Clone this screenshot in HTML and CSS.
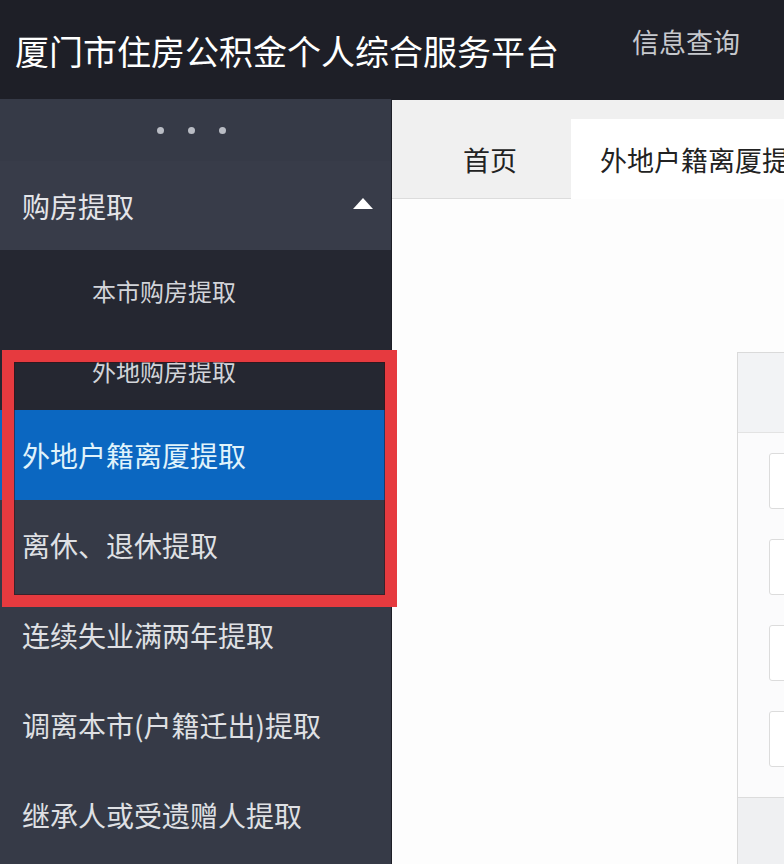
FILE: index.html
```html
<!DOCTYPE html>
<html lang="zh-CN">
<head>
<meta charset="utf-8">
<title>厦门市住房公积金个人综合服务平台</title>
<link rel="stylesheet" href="styles.css">
</head>
<body>
<div class="page">
  <header class="header">
    <div class="title">厦门市住房公积金个人综合服务平台</div>
    <nav class="nav">信息查询</nav>
  </header>
  <div class="layout">
    <aside class="sidebar">
      <div class="dots"><span class="dot"></span><span class="dot"></span><span class="dot"></span></div>
      <div class="group-title">
        <span>购房提取</span>
        <svg class="caret" width="20" height="11" viewBox="0 0 20 11"><polygon points="10,0 20,11 0,11" fill="#ffffff"/></svg>
      </div>
      <div class="submenu">
        <div class="sub-item">本市购房提取</div>
        <div class="sub-item">外地购房提取</div>
      </div>
      <div class="item active">外地户籍离厦提取</div>
      <div class="item">离休、退休提取</div>
      <div class="item">连续失业满两年提取</div>
      <div class="item">调离本市(户籍迁出)提取</div>
      <div class="item">继承人或受遗赠人提取</div>
    </aside>
    <main class="main">
      <div class="tabs">
        <div class="tab">首页</div>
        <div class="tab current">外地户籍离厦提取</div>
      </div>
      <div class="content">
        <div class="panel">
          <div class="panel-head"></div>
          <div class="panel-body">
            <div class="field"></div>
            <div class="field"></div>
            <div class="field"></div>
            <div class="field"></div>
          </div>
          <div class="panel-foot"></div>
        </div>
      </div>
    </main>
  </div>
  <div class="highlight"></div>
</div>
</body>
</html>
```

FILE: styles.css
```css
* { box-sizing: border-box; }
html, body { margin: 0; padding: 0; }
body {
  width: 784px;
  height: 864px;
  overflow: hidden;
  font-family: "Noto Sans CJK SC", "Noto Sans", sans-serif;
  background: #ffffff;
}
.page {
  position: relative;
  width: 784px;
  height: 864px;
  overflow: hidden;
}
.header {
  height: 99px;
  background: #1e1f27;
  display: flex;
  align-items: flex-start;
  padding-left: 15px;
}
.title {
  margin-top: 31px;
  font-size: 34px;
  line-height: 40px;
  color: #ffffff;
  white-space: nowrap;
}
.nav {
  margin-top: 27px;
  margin-left: 73px;
  font-size: 27px;
  line-height: 30px;
  color: #c6c8cd;
  white-space: nowrap;
}
.layout {
  display: flex;
  height: 765px;
}
.sidebar {
  width: 391px;
  flex: none;
  background: #363a47;
  display: flex;
  flex-direction: column;
}
.dots {
  height: 62px;
  display: flex;
  justify-content: center;
  align-items: center;
  gap: 24px;
  padding-right: 9px;
}
.dot {
  width: 7px;
  height: 7px;
  border-radius: 50%;
  background: #b9bcc4;
}
.group-title {
  height: 89px;
  display: flex;
  align-items: center;
  justify-content: space-between;
  padding: 0 18px 0 22px;
  font-size: 28px;
  color: #e4e5e9;
  background: #383c49;
}
.caret { display: block; margin-top: -4px; }
.submenu {
  background: #252731;
}
.sub-item {
  height: 80px;
  display: flex;
  align-items: center;
  padding-left: 92px;
  font-size: 24px;
  color: #d2d4d9;
  white-space: nowrap;
}
.item {
  height: 90px;
  display: flex;
  align-items: center;
  padding-left: 22px;
  font-size: 28px;
  color: #dfe0e4;
  white-space: nowrap;
}
.item.active {
  background: #0b67c1;
  color: #e0f3fb;
}
.main {
  flex: 1;
  min-width: 0;
  overflow: hidden;
  display: flex;
  flex-direction: column;
  padding-top: 1px;
  background: #1e1f27;
}
.tabs {
  height: 99px;
  flex: none;
  margin-left: 1px;
  background: #f0f0f0;
  display: flex;
  align-items: flex-end;
  border-bottom: 1px solid #dcdcdc;
}
.tab {
  width: 179px;
  height: 78px;
  flex: none;
  display: flex;
  align-items: center;
  justify-content: center;
  padding-left: 17px;
  font-size: 27px;
  color: #222222;
  white-space: nowrap;
}
.tab.current {
  width: 260px;
  height: 80px;
  margin-bottom: -1px;
  justify-content: flex-start;
  padding-left: 29px;
  background: #ffffff;
  overflow: hidden;
}
.content {
  flex: 1;
  background: #fdfdfd;
  margin-left: 1px;
  padding: 153px 0 0 345px;
  overflow: hidden;
}
.panel {
  width: 400px;
  height: 520px;
  border: 1px solid #dadada;
  background: #fbfbfc;
}
.panel-head {
  height: 80px;
  background: #f2f3f5;
  border-bottom: 1px solid #e3e3e3;
}
.panel-body {
  display: flex;
  flex-direction: column;
  gap: 30px;
  padding: 20px 0 30px 31px;
}
.field {
  height: 56px;
  border: 1px solid #dcdcdc;
  border-radius: 3px;
  background: #ffffff;
}
.panel-foot {
  height: 80px;
  background: #eff0f2;
  border-top: 1px solid #dcdcdc;
}
.highlight {
  position: absolute;
  left: 2px;
  top: 350px;
  width: 395px;
  height: 257px;
  border: 12px solid #e63a3f;
  box-shadow: inset 0 0 0 1px rgba(60, 10, 15, 0.5);
  pointer-events: none;
}
```
